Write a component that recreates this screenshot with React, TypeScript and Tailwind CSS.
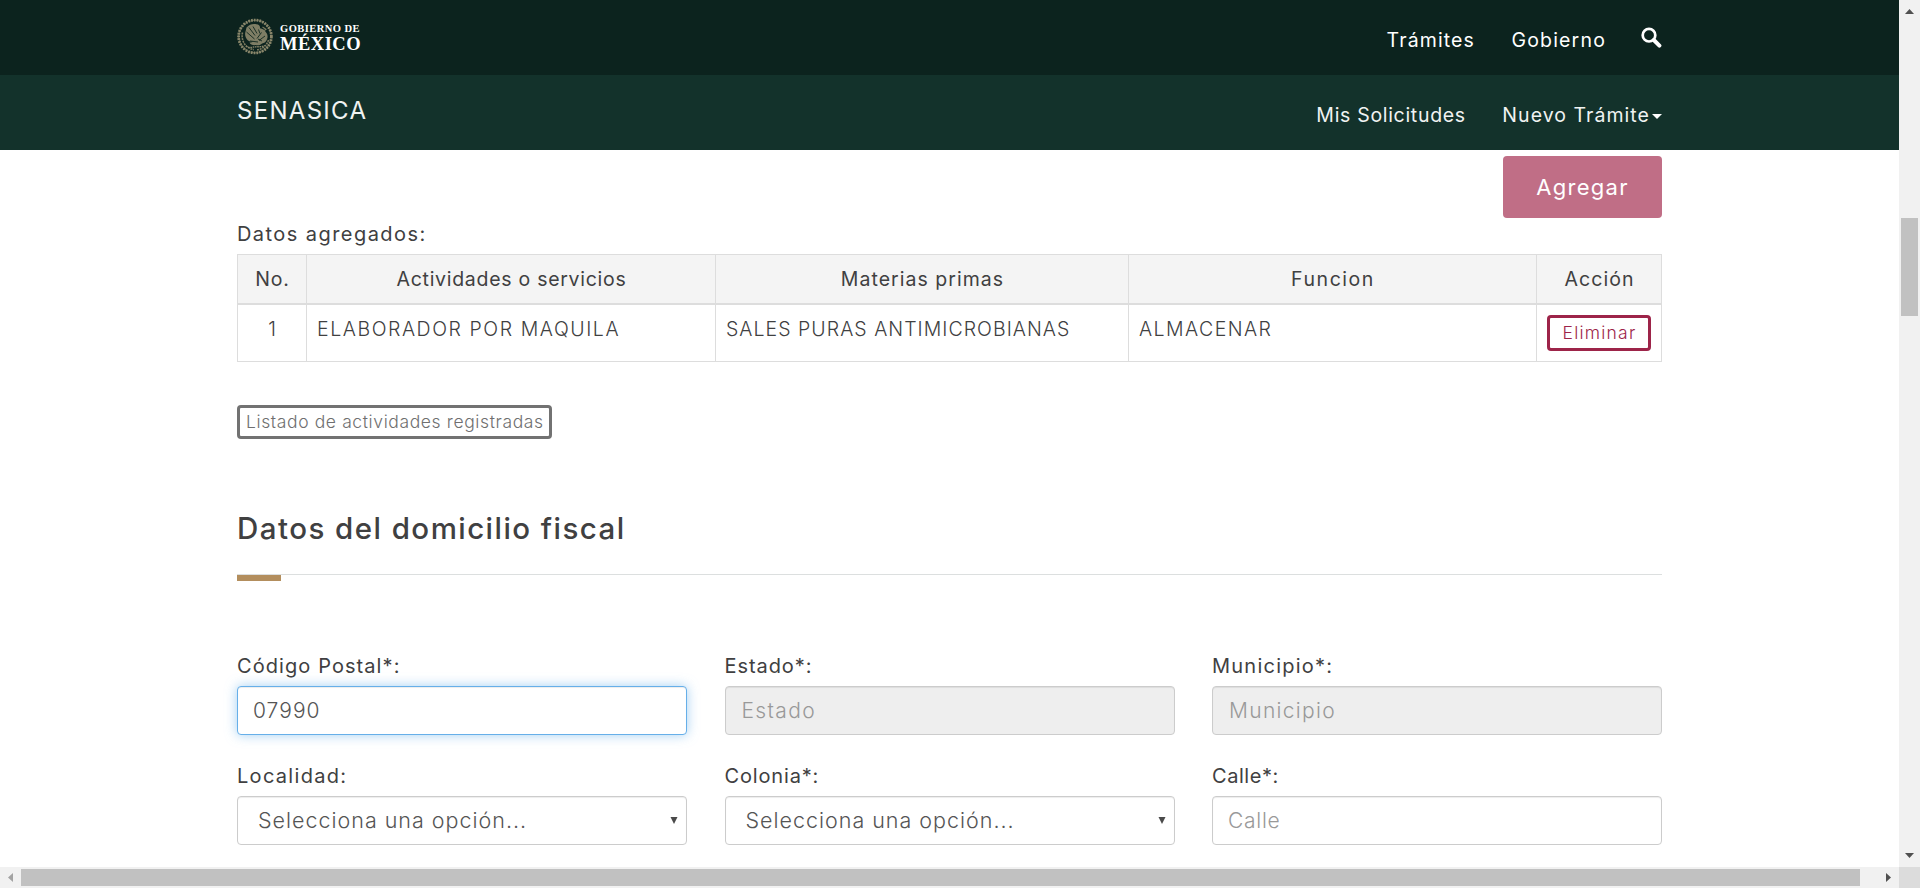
import React from 'react';

const headCell = 'flex items-center justify-center border-l border-[#ddd] pt-[2px] pl-[1px]';
const bodyCell = 'border-l border-[#ddd] px-2.5 pt-3 leading-6 font-light whitespace-nowrap';
const fieldBase = 'mt-2 flex h-[49px] items-center rounded-[4px] border text-[21px] font-light whitespace-nowrap';

function Seal() {
  return (
    <svg width="37" height="37" viewBox="0 0 37 37" fill="none">
      <circle cx="18" cy="18.5" r="16.4" stroke="#8a876b" strokeWidth="2.8" strokeDasharray="1.8 1" />
      <circle cx="18" cy="18.5" r="16.4" stroke="#8a876b" strokeWidth="1" opacity="0.6" />
      <path d="M5.500 14.500C3.800 22 8 30.500 17 31.600M31.500 22C29.600 28 25 31.400 20 31.700" stroke="#7d7b60" strokeWidth="1.6" strokeDasharray="2 .8" />
      <path d="M9.500 9.500c3-3.400 7-4.200 10-3.200 2.600.2 4 2 3.400 4 2.600.6 4.800 1.600 5.800 3.800 1.800 1.600 2.400 4.400 1.400 6.800-.8 2.600-2.800 4.200-5 4.600-1.800 1.800-4.400 2.200-6.400 1.600-2.800.4-5.400-.6-6.200-2.600 1.600.2 2.800-.2 3.600-1-2.800.4-5-.6-6.400-2.600-1.800-2.400-2-5.600-1-8z" fill="#7f7e65" />
      <path d="M12 9.500l6 8M16 8.500l4 7M9.500 14l8 7M24.500 14.500l-4.500 6M28 18l-6 4.500M13 23l8 1M21.500 11.500l1.500 4M25 23l-4-2" stroke="#10281f" strokeWidth="0.9" />
      <path d="M9 28c3 2.200 6.400 1.200 9.400.8 3-.2 6.200.4 9.200-1.400" stroke="#8a876b" strokeWidth="1.3" strokeDasharray="1.6 .7" />
      <path d="M25.500 9l3.400 2.200-1.600 1.400" stroke="#7d7b60" strokeWidth="1.2" />
    </svg>
  );
}

function Header() {
  return (
    <header className="text-[19.5px] whitespace-nowrap text-white">
      <div className="flex h-[75px] justify-between bg-[#0c231e] pr-[237px] pl-[237px]">
        <div className="flex items-start pt-[18px]">
          <Seal />
          <div className="ml-[6px] pt-[5px] font-['Liberation_Serif',serif] font-bold">
            <div className="h-[12px] text-[10.5px] leading-[12px] tracking-[0.46px]">GOBIERNO DE</div>
            <div className="h-[18px] text-[18.5px] leading-[18px] tracking-[0.5px]">MÉXICO</div>
          </div>
        </div>
        <nav className="flex items-center pt-[7px]">
          <span className="tracking-[0.0576em]">Trámites</span>
          <span className="ml-[36.5px] tracking-[0.06em]">Gobierno</span>
          <svg className="-mt-[8px] ml-[35px]" width="21" height="21" viewBox="0 0 21 21" fill="none" stroke="#fff">
            <circle cx="8" cy="8.2" r="6.3" strokeWidth="2.7" />
            <path d="M12.800 13l5.600 5.600" strokeWidth="4" strokeLinecap="round" />
          </svg>
        </nav>
      </div>
      <div className="flex h-[75px] justify-between bg-[#13322b] pr-[237px] pl-[237px] text-[#f0f3f2]">
        <div className="flex items-center pb-[3px] text-[24px] tracking-[0.054em]">SENASICA</div>
        <nav className="flex items-center pt-[7px]">
          <span className="tracking-[0.0354em]">Mis Solicitudes</span>
          <span className="ml-[36.5px] tracking-[0.0535em]">Nuevo Trámite</span>
          <svg className="mt-[1px] ml-[2px]" width="10" height="5" viewBox="0 0 10 5">
            <path d="M0 0h10L5 5z" fill="#fff" />
          </svg>
        </nav>
      </div>
    </header>
  );
}

function ActivitiesTable() {
  const row = 'grid grid-cols-[69px_409px_413px_408px_126px]';
  return (
    <div className="mt-2 text-[19.5px]">
      <div className={`${row} h-[51px] border-t border-b-2 border-t-[#ddd] border-b-[#ddd] bg-[#f4f4f4]`}>
        <div className={`${headCell} tracking-[0.0414em]`}>No.</div>
        <div className={`${headCell} tracking-[0.0371em]`}>Actividades o servicios</div>
        <div className={`${headCell} tracking-[0.0529em]`}>Materias primas</div>
        <div className={`${headCell} tracking-[0.0800em]`}>Funcion</div>
        <div className={`${headCell} border-r tracking-[0.0549em]`}>Acción</div>
      </div>
      <div className={`${row} h-[57px] border-b border-[#ddd]`}>
        <div className={`${bodyCell} text-center`}>1</div>
        <div className={`${bodyCell} tracking-[0.0800em]`}>ELABORADOR POR MAQUILA</div>
        <div className={`${bodyCell} tracking-[0.0530em]`}>SALES PURAS ANTIMICROBIANAS</div>
        <div className={`${bodyCell} tracking-[0.0740em]`}>ALMACENAR</div>
        <div className="border-r border-l border-[#ddd] p-2.5">
          <button className="flex h-9 w-[104px] items-center justify-center rounded-[4px] border-3 border-[#9d2449] pl-[1px] text-[17.5px] font-light tracking-[0.0700em] text-[#9d2449]">
            Eliminar
          </button>
        </div>
      </div>
    </div>
  );
}

function Label({ children }: { children: React.ReactNode }) {
  return <div className="h-6 text-[20px] leading-6 whitespace-nowrap">{children}</div>;
}

function SelectBox() {
  return (
    <div className={`${fieldBase} justify-between border-[#ccc] bg-white pr-2 pl-[20px] text-[#555] shadow-[inset_0_1px_1px_rgba(0,0,0,0.075)]`}>
      <span className="text-[21.5px] tracking-[0.046em]">Selecciona una opción...</span>
      <svg width="8" height="7" viewBox="0 0 8 7">
        <path d="M0.500 0h7L4 7z" fill="#4a4a4a" />
      </svg>
    </div>
  );
}

function AddressForm() {
  const disabled = `${fieldBase} border-[#ccc] bg-[#eee] pl-[16px] text-[#999] shadow-[inset_0_1px_1px_rgba(0,0,0,0.075)]`;
  return (
    <div className="mt-[73px] grid grid-cols-[450px_450px_450px] gap-x-[37.5px] gap-y-[29px]">
      <div>
        <Label><span className="tracking-[0.0540em]">Código Postal*:</span></Label>
        <div className={`${fieldBase} border-[#66afe9] bg-white pl-[15px] tracking-[0.0500em] text-[#555] shadow-[inset_0_1px_1px_rgba(0,0,0,0.075),0_0_12px_rgba(102,175,233,0.6)]`}>
          07990
        </div>
      </div>
      <div>
        <Label><span className="tracking-[0.0460em]">Estado*:</span></Label>
        <div className={`${disabled} tracking-[0.0650em]`}>Estado</div>
      </div>
      <div>
        <Label><span className="tracking-[0.0620em]">Municipio*:</span></Label>
        <div className={`${disabled} tracking-[0.0620em]`}>Municipio</div>
      </div>
      <div>
        <Label><span className="tracking-[0.0650em]">Localidad:</span></Label>
        <SelectBox />
      </div>
      <div>
        <Label><span className="tracking-[0.0420em]">Colonia*:</span></Label>
        <SelectBox />
      </div>
      <div>
        <Label><span className="tracking-[0.0270em]">Calle*:</span></Label>
        <div className={`${fieldBase} border-[#ccc] bg-white pl-[15px] tracking-[0.0342em] text-[#999] shadow-[inset_0_1px_1px_rgba(0,0,0,0.075)]`}>
          Calle
        </div>
      </div>
    </div>
  );
}

function VerticalScrollbar() {
  return (
    <div className="flex h-[867px] w-[21px] flex-col items-center bg-[#f1f1f1]">
      <svg className="mt-[9px]" width="9" height="5" viewBox="0 0 9 5"><path d="M0 5h9L4.500 0z" fill="#505050" /></svg>
      <div className="mt-[204px] h-[98px] w-[17px] bg-[#c1c1c1]" />
      <svg className="mt-auto mb-[9px]" width="9" height="5" viewBox="0 0 9 5"><path d="M0 0h9L4.500 5z" fill="#505050" /></svg>
    </div>
  );
}

function HorizontalScrollbar() {
  return (
    <div className="flex h-[21px]">
      <div className="flex w-[1899px] items-center bg-[#f1f1f1]">
        <svg className="ml-[8px]" width="5" height="9" viewBox="0 0 5 9"><path d="M5 0v9L0 4.500z" fill="#a3a3a3" /></svg>
        <div className="ml-[8px] h-[17px] w-[1839px] bg-[#c1c1c1]" />
        <svg className="ml-[26px]" width="5" height="9" viewBox="0 0 5 9"><path d="M0 0v9l5-4.500z" fill="#505050" /></svg>
      </div>
      <div className="w-[21px] bg-[#dcdcdc]" />
    </div>
  );
}

export default function App() {
  return (
    <div className="h-[888px] w-[1920px] overflow-hidden bg-white font-['Inter',sans-serif] text-[#404041]">
      <div className="flex">
        <div className="h-[867px] w-[1899px] overflow-hidden">
          <Header />
          <main className="px-[237px] pt-[6px]">
            <div className="flex justify-end">
              <button className="h-[62px] w-[159px] rounded-[4px] bg-[#c06e86] text-[22px] tracking-[0.0580em] text-white">Agregar</button>
            </div>
            <div className="mt-1 h-6 text-[20px] leading-6 tracking-[0.0720em]">Datos agregados:</div>
            <ActivitiesTable />
            <button className="mt-[43px] flex h-[34px] w-[315px] items-center rounded-[4px] border-3 border-[#727272] pl-[6px] text-[17.5px] font-light tracking-[0.0351em] whitespace-nowrap text-[#6f6f70]">
              Listado de actividades registradas
            </button>
            <h2 className="mt-[69px] h-10 text-[29.5px] leading-10 font-medium tracking-[0.0490em]">Datos del domicilio fiscal</h2>
            <div className="mt-[26px] border-t border-[#dcdfdf]">
              <div className="h-[6px] w-[44px] bg-[#b38e5d]" />
            </div>
            <AddressForm />
          </main>
        </div>
        <VerticalScrollbar />
      </div>
      <HorizontalScrollbar />
    </div>
  );
}
